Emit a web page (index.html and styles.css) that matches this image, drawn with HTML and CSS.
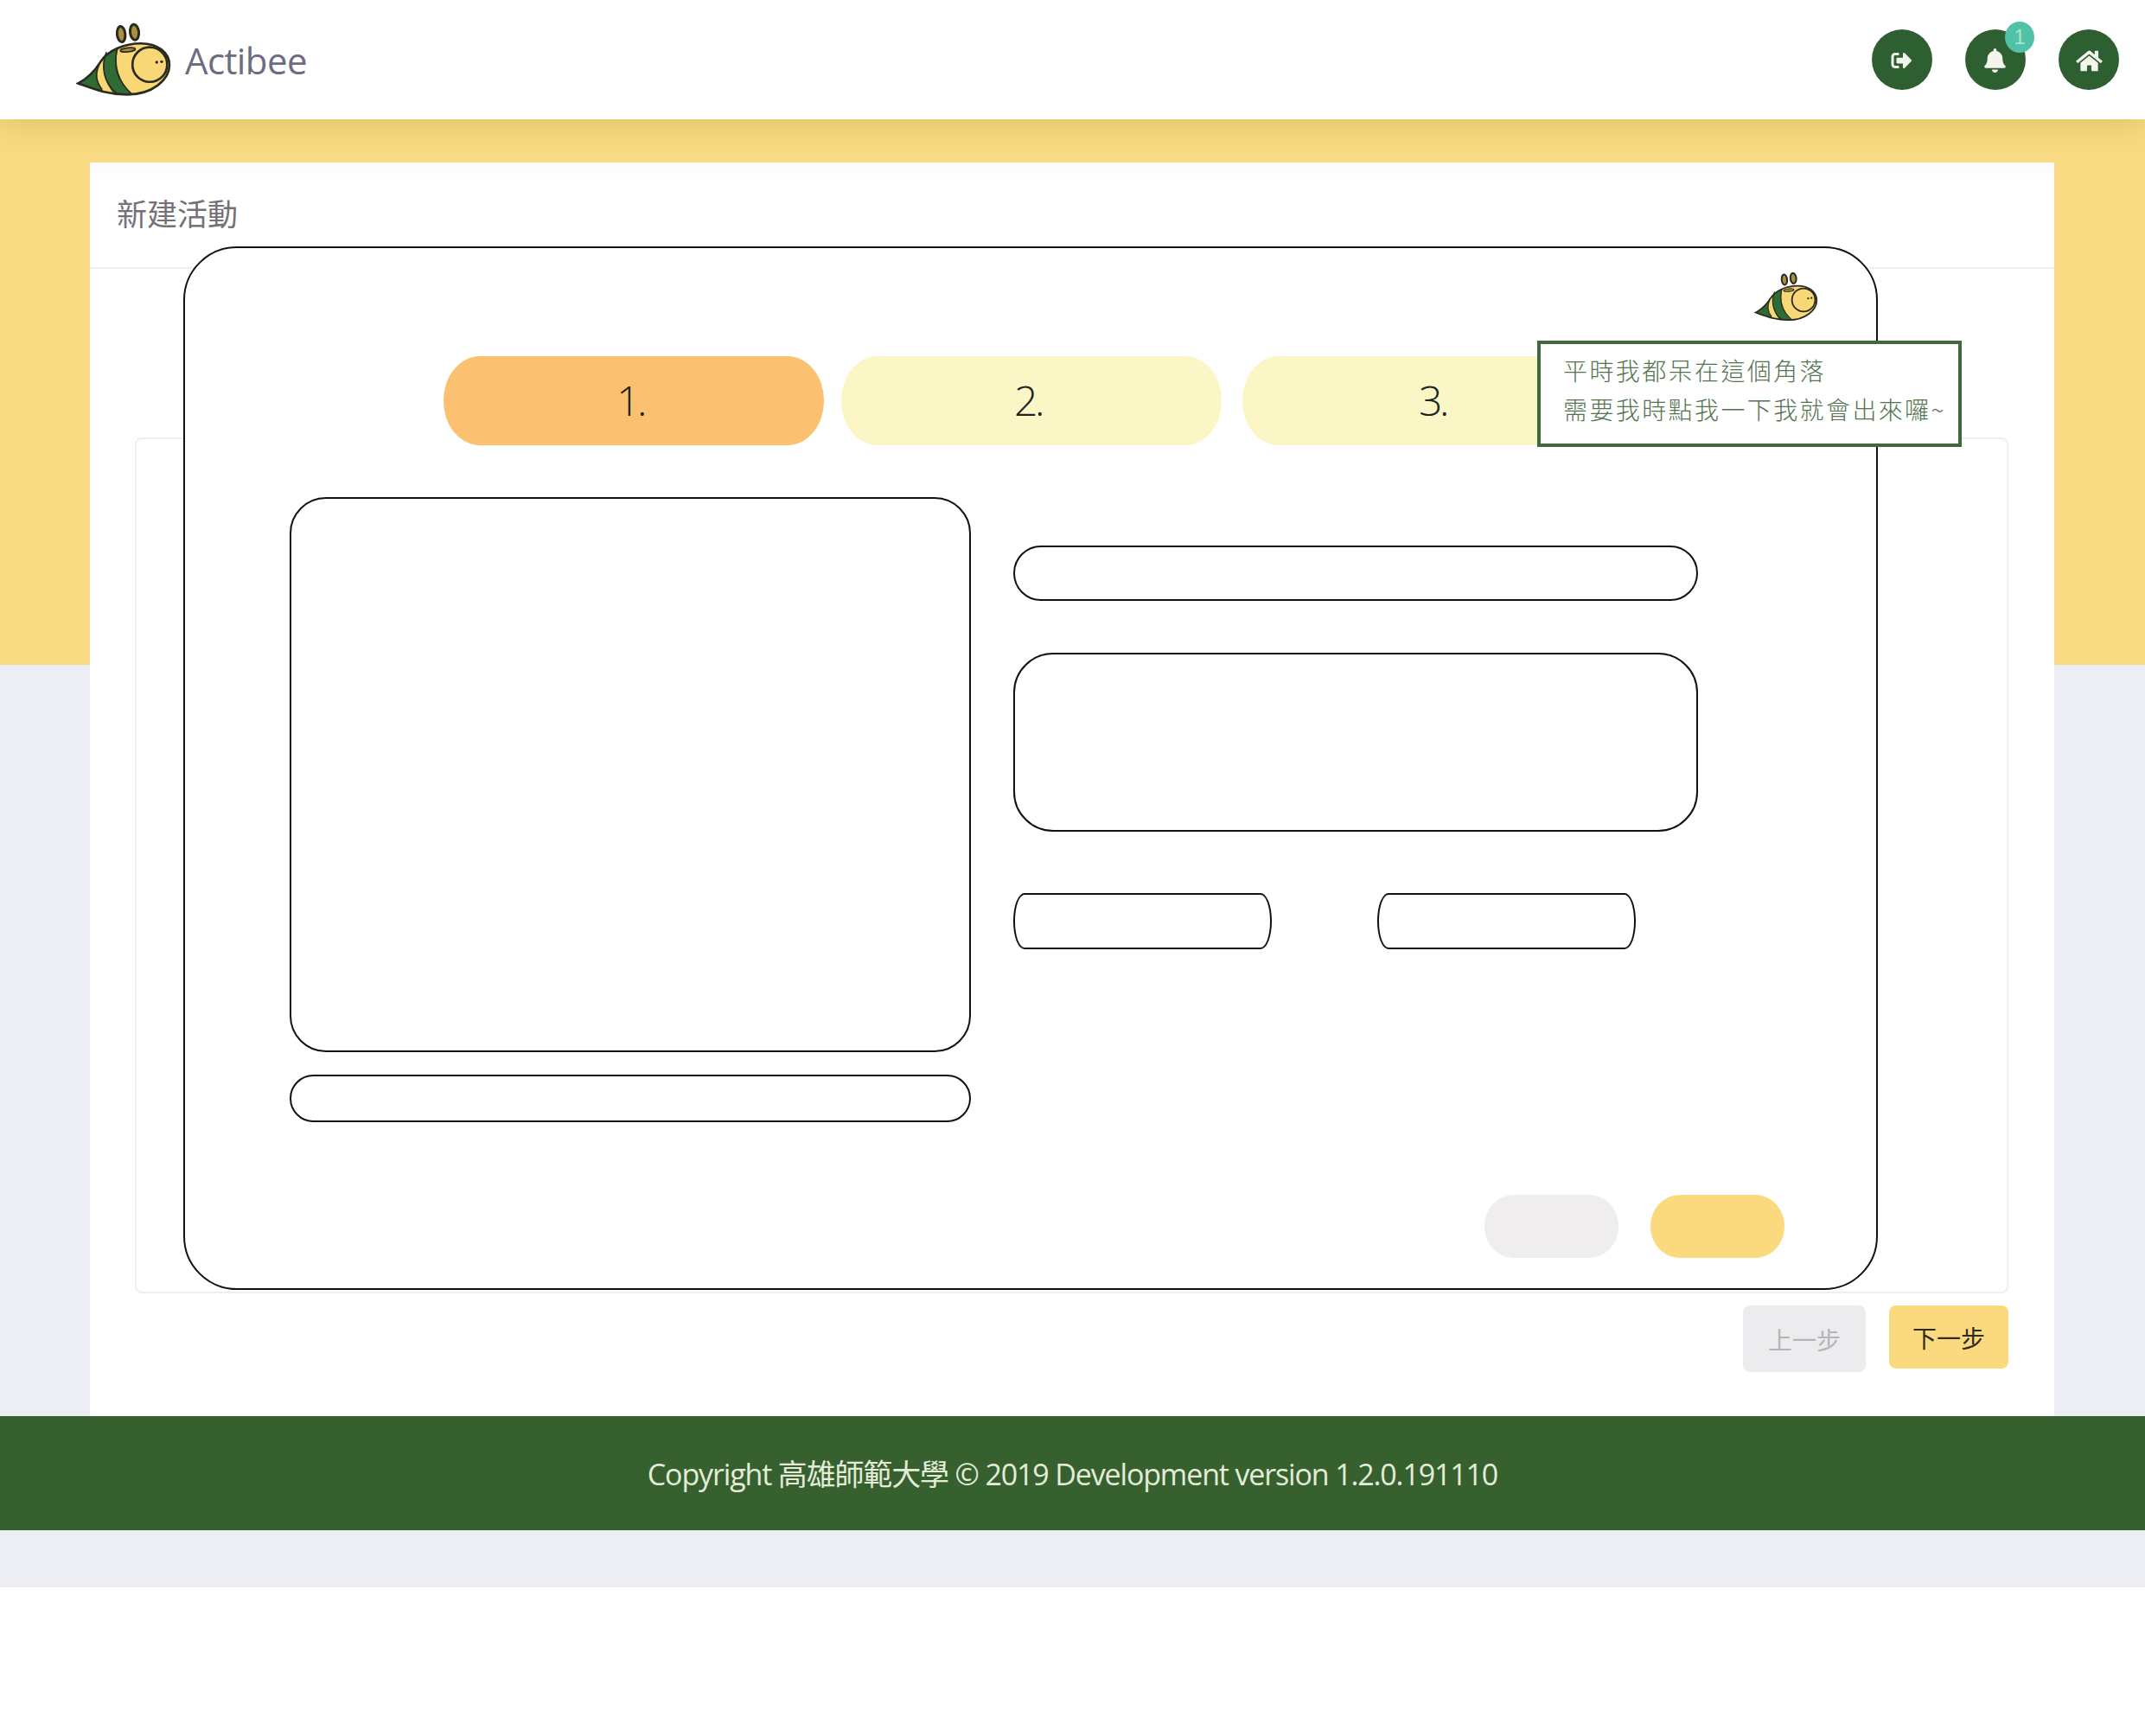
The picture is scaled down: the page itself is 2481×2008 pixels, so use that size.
FILE: index.html
```html
<!DOCTYPE html>
<html lang="zh-Hant">
<head>
<meta charset="utf-8">
<title>Actibee</title>
<link rel="stylesheet" href="styles.css">
</head>
<body>
<svg class="defs" width="0" height="0" aria-hidden="true">
  <defs>
    <clipPath id="bee-body-clip">
      <path d="M92 283C125 266 150 240 170 208C195 170 250 145 310 145C365 145 408 175 408 220C408 270 350 322 262 322C190 322 140 300 92 283Z"/>
    </clipPath>
    <symbol id="bee" viewBox="85 75 335 255">
      <path d="M92 283C125 266 150 240 170 208C195 170 250 145 310 145C365 145 408 175 408 220C408 270 350 322 262 322C190 322 140 300 92 283Z" fill="#f8d777"/>
      <g clip-path="url(#bee-body-clip)">
        <path d="M80 295L172 195C150 235 150 275 180 310Z" fill="#2f6b35"/>
        <path d="M190 170L232 155C215 215 230 275 285 330L225 330C180 285 170 220 190 170Z" fill="#2f6b35"/>
      </g>
      <path d="M92 283C125 266 150 240 170 208C195 170 250 145 310 145C365 145 408 175 408 220C408 270 350 322 262 322C190 322 140 300 92 283Z" fill="none" stroke="#2a2a1f" stroke-width="8"/>
      <path d="M165 218C150 250 155 280 175 304M190 175C170 225 180 280 225 318M228 162C212 220 228 275 278 320" fill="none" stroke="#2a2a1f" stroke-width="5"/>
      <circle cx="340" cy="218" r="60" fill="#f8d777" stroke="#2a2a1f" stroke-width="8"/>
      <ellipse cx="264" cy="167" rx="26" ry="7" fill="#a78d3f" stroke="#2a2a1f" stroke-width="5" transform="rotate(-6 264 167)"/>
      <circle cx="364" cy="210" r="5" fill="#2a2a1f"/>
      <circle cx="381" cy="208" r="5" fill="#2a2a1f"/>
      <ellipse cx="241" cy="113" rx="14" ry="27" fill="#a8923f" stroke="#2a2a1f" stroke-width="9" transform="rotate(-6 241 113)"/>
      <ellipse cx="287" cy="106" rx="15" ry="27" fill="#a8923f" stroke="#2a2a1f" stroke-width="9" transform="rotate(-6 287 106)"/>
    </symbol>
  </defs>
</svg>

<div class="page">
  <header class="topbar">
    <a class="brand">
      <svg class="brand-bee"><use href="#bee"/></svg>
      <span class="brand-name">Actibee</span>
    </a>
    <nav class="actions">
      <button class="round-btn">
        <svg class="icon-out" viewBox="0 0 512 512"><path d="M497 273L329 441c-15 15-41 4.500-41-17v-96H152c-13.300 0-24-10.700-24-24v-96c0-13.300 10.700-24 24-24h136V88c0-21.400 25.900-32 41-17l168 168c9.300 9.400 9.300 24.600 0 34zM192 436v-40c0-6.600-5.400-12-12-12H96c-17.700 0-32-14.300-32-32V160c0-17.700 14.300-32 32-32h84c6.600 0 12-5.400 12-12V76c0-6.600-5.400-12-12-12H96c-53 0-96 43-96 96v192c0 53 43 96 96 96h84c6.600 0 12-5.400 12-12z"/></svg>
      </button>
      <button class="round-btn">
        <svg class="icon-bell" viewBox="0 0 448 512"><path d="M224 512c35.320 0 63.970-28.650 63.970-64H160.030c0 35.350 28.650 64 63.970 64zm215.390-149.710c-19.320-20.760-55.470-51.990-55.470-154.290 0-77.700-54.480-139.900-127.940-155.160V32c0-17.670-14.320-32-31.980-32s-31.980 14.330-31.980 32v20.840C118.560 68.100 64.080 130.300 64.080 208c0 102.300-36.150 133.530-55.470 154.290-6 6.450-8.660 14.160-8.610 21.710.11 16.400 12.980 32 32.100 32h383.800c19.120 0 32-15.600 32.100-32 .05-7.550-2.610-15.270-8.610-21.710z"/></svg>
        <span class="badge">1</span>
      </button>
      <button class="round-btn">
        <svg class="icon-home" viewBox="0 0 576 512"><path d="M280.370 148.260L96 300.110V464a16 16 0 0 0 16 16l112.060-.29a16 16 0 0 0 15.920-16V368a16 16 0 0 1 16-16h64a16 16 0 0 1 16 16v95.640a16 16 0 0 0 16 16.050L464 480a16 16 0 0 0 16-16V300L295.670 148.260a12.190 12.190 0 0 0-15.300 0zM571.600 251.470L488 182.560V44.050a12 12 0 0 0-12-12h-56a12 12 0 0 0-12 12v72.610L318.470 43a48 48 0 0 0-61 0L4.340 251.470a12 12 0 0 0-1.600 16.900l25.500 31A12 12 0 0 0 45.150 301l235.220-193.740a12.190 12.190 0 0 1 15.300 0L530.900 301a12 12 0 0 0 16.900-1.600l25.500-31a12 12 0 0 0-1.700-16.930z"/></svg>
      </button>
    </nav>
  </header>

  <main class="content">
    <section class="card">
      <h1 class="card-title">新建活動</h1>
      <div class="card-body">
        <div class="form-frame"></div>
        <div class="wizard-nav">
          <button class="nav-btn nav-prev">上一步</button>
          <button class="nav-btn nav-next">下一步</button>
        </div>
      </div>
    </section>
  </main>

  <footer class="footer">Copyright 高雄師範大學 © 2019 Development version 1.2.0.191110</footer>
  <div class="footer-gap"></div>

  <div class="dialog">
    <div class="dialog-bee-row">
      <svg class="dialog-bee"><use href="#bee"/></svg>
    </div>
    <div class="steps">
      <div class="step step-active">1.</div>
      <div class="step">2.</div>
      <div class="step step-third">3.</div>
    </div>
    <div class="sketch">
      <div class="sketch-left">
        <div class="sk-image"></div>
        <div class="sk-caption"></div>
      </div>
      <div class="sketch-right">
        <div class="sk-input"></div>
        <div class="sk-area"></div>
        <div class="sk-pair">
          <div class="sk-small"></div>
          <div class="sk-small"></div>
        </div>
      </div>
    </div>
    <div class="dialog-actions">
      <div class="sk-btn sk-btn-gray"></div>
      <div class="sk-btn sk-btn-yellow"></div>
    </div>
  </div>

  <div class="tip">平時我都呆在這個角落<br>需要我時點我一下我就會出來囉~</div>
</div>
</body>
</html>
```
FILE: styles.css
```css
* { box-sizing: border-box; }

html, body {
  margin: 0;
  background: #fff;
  font-family: "Open Sans", "Noto Sans CJK TC", sans-serif;
}

.defs { position: absolute; }

.page {
  position: relative;
  width: 2481px;
}

/* top bar */
.topbar {
  position: relative;
  z-index: 1;
  height: 138px;
  display: flex;
  align-items: center;
  justify-content: space-between;
  padding: 0 30px 0 88px;
  background: #fff;
  box-shadow: 0 4px 36px rgba(120, 90, 20, .22);
}

.brand {
  display: flex;
  align-items: center;
  gap: 14px;
}

.brand-bee {
  width: 112px;
  height: 87px;
}

.brand-name {
  font-size: 42px;
  color: #6d6c80;
  letter-spacing: -.6px;
}

.actions {
  display: flex;
  gap: 38px;
}

.round-btn {
  position: relative;
  width: 70px;
  height: 70px;
  padding: 2px 0 0;
  border: 0;
  border-radius: 50%;
  background: #2e5f30;
  display: flex;
  align-items: center;
  justify-content: center;
}

.round-btn svg { fill: #f4f4ee; display: block; }
.icon-out { width: 27px; height: 24px; margin-right: 2px; }
.icon-bell { width: 27px; height: 28px; margin-right: 1px; }
.icon-home { width: 31px; height: 27px; }

.badge {
  position: absolute;
  top: -9px;
  right: -10px;
  width: 34px;
  height: 36px;
  border-radius: 50%;
  background: #4fc2a8;
  color: #a8e2d2;
  font-size: 24px;
  font-weight: 300;
  line-height: 36px;
  text-align: center;
}

/* main */
.content {
  padding: 50px 105px 0 104px;
  background: linear-gradient(#f8db82 0, #f8db82 631px, #eceef3 631px);
}

.card {
  height: 1450px;
  background: #fff;
  border-radius: 4px 4px 0 0;
  display: flex;
  flex-direction: column;
}

.card-title {
  height: 123px;
  margin: 0;
  padding: 0 31px 6px;
  display: flex;
  align-items: center;
  font-size: 35px;
  font-weight: 400;
  color: #757178;
  border-bottom: 2px solid #efefef;
  background: linear-gradient(#fafafa, #fff 20px);
}

.card-body {
  padding: 195px 53px 0 52px;
}

.form-frame {
  height: 990px;
  border: 2px solid #efefef;
  border-radius: 8px;
}

.wizard-nav {
  display: flex;
  justify-content: flex-end;
  align-items: flex-start;
  gap: 27px;
  margin-top: 14px;
}

.nav-btn {
  border: 0;
  border-radius: 8px;
  font-family: "Noto Sans CJK TC", sans-serif;
  font-size: 28px;
  padding: 0;
}

.nav-prev {
  width: 142px;
  height: 77px;
  background: #ecebed;
  color: #b6b4b6;
}

.nav-next {
  width: 138px;
  height: 73px;
  background: #fad97f;
  color: #2e2a1c;
}

/* footer */
.footer {
  height: 132px;
  padding-bottom: 2px;
  display: flex;
  align-items: center;
  justify-content: center;
  background: #36612f;
  color: #e4ebd9;
  font-size: 34px;
  letter-spacing: -1.15px;
}

.footer-gap {
  height: 66px;
  background: #eceef3;
}

/* overlay dialog */
.dialog {
  position: absolute;
  z-index: 2;
  left: 212px;
  top: 285px;
  width: 1960px;
  height: 1207px;
  background: #fff;
  border: 2px solid #111;
  border-radius: 62px;
  display: flex;
  flex-direction: column;
}

.dialog-bee-row {
  display: flex;
  justify-content: flex-end;
  padding: 28px 65px 0 0;
}

.dialog-bee {
  width: 77px;
  height: 57px;
  display: block;
}

.steps {
  display: flex;
  gap: 20px;
  margin-top: 40px;
  padding-left: 299px;
}

.step {
  width: 440px;
  height: 103px;
  padding: 0 8px 2px 0;
  border-radius: 42px / 51px;
  background: #faf6c5;
  display: flex;
  align-items: center;
  justify-content: center;
  font-size: 48px;
  font-weight: 300;
  letter-spacing: -3.5px;
  color: #222;
}

.step-active { background: #fcc170; }
.step-third { margin-left: 4px; padding-right: 0; }

.sketch {
  display: flex;
  gap: 49px;
  margin-top: 60px;
  padding-left: 121px;
}

.sketch-left {
  width: 788px;
  display: flex;
  flex-direction: column;
  gap: 26px;
}

.sk-image {
  height: 642px;
  border: 2px solid #111;
  border-radius: 42px;
}

.sk-caption {
  height: 55px;
  border: 2px solid #111;
  border-radius: 28px;
}

.sketch-right {
  width: 792px;
  padding-top: 56px;
  display: flex;
  flex-direction: column;
}

.sk-input {
  height: 64px;
  border: 2px solid #111;
  border-radius: 32px;
}

.sk-area {
  height: 207px;
  margin-top: 60px;
  border: 2px solid #111;
  border-radius: 46px;
}

.sk-pair {
  display: flex;
  gap: 122px;
  margin-top: 71px;
}

.sk-small {
  width: 299px;
  height: 65px;
  border: 2px solid #111;
  border-radius: 13px / 32px;
}

.dialog-actions {
  margin-top: auto;
  display: flex;
  justify-content: flex-end;
  gap: 37px;
  padding: 0 106px 35px 0;
}

.sk-btn {
  width: 155px;
  height: 73px;
  border-radius: 34px / 36px;
}

.sk-btn-gray { background: #efedee; }
.sk-btn-yellow { background: #fad97f; }

/* tooltip */
.tip {
  position: absolute;
  z-index: 3;
  left: 1778px;
  top: 394px;
  width: 491px;
  height: 123px;
  padding: 8px 0 0 26px;
  background: #fff;
  border: 4px solid #3f6a3b;
  font-family: "Noto Sans CJK TC", sans-serif;
  font-size: 28px;
  font-weight: 300;
  line-height: 45px;
  letter-spacing: 2.4px;
  color: #54734f;
  white-space: nowrap;
}
```
